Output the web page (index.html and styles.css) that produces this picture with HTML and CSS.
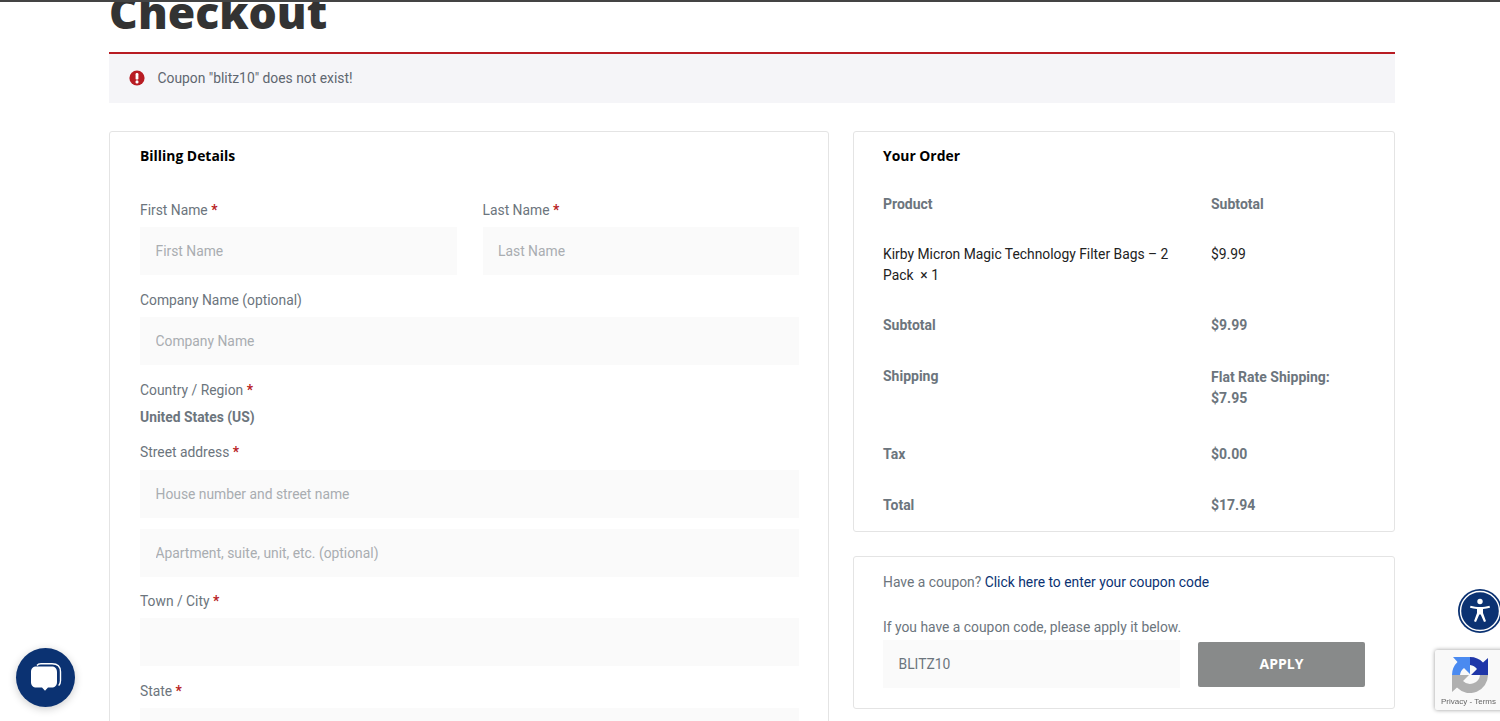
FILE: index.html
```html
<!DOCTYPE html>
<html lang="en">
<head>
    <meta charset="UTF-8">
    <meta name="viewport" content="width=device-width, initial-scale=1.0">
    <link rel="stylesheet" href="styles.css">
    <title>Checkout</title>
</head>
<body>
    <div class="top-line"></div>
    <main class="page">
        <h1 class="page-title">Checkout</h1>

        <div class="notice">
            <svg class="notice-icon" viewBox="0 0 16 16" width="16" height="16">
                <circle cx="8" cy="8" r="7.6" fill="#b81c23"/>
                <rect x="6.6" y="3" width="2.8" height="6.6" rx="1.2" fill="#fff"/>
                <circle cx="8" cy="11.9" r="1.55" fill="#fff"/>
            </svg>
            <span>Coupon "blitz10" does not exist!</span>
        </div>

        <div class="columns">
            <section class="card billing">
                <h2 class="card-title">Billing Details</h2>

                <div class="field-row">
                    <div class="field">
                        <label class="label">First Name <b class="req">*</b></label>
                        <input class="input" placeholder="First Name">
                    </div>
                    <div class="field">
                        <label class="label">Last Name <b class="req">*</b></label>
                        <input class="input" placeholder="Last Name">
                    </div>
                </div>

                <div class="field">
                    <label class="label">Company Name (optional)</label>
                    <input class="input" placeholder="Company Name">
                </div>

                <div class="field country">
                    <label class="label">Country / Region <b class="req">*</b></label>
                    <strong class="country-value">United States (US)</strong>
                </div>

                <div class="field street">
                    <label class="label">Street address <b class="req">*</b></label>
                    <input class="input" placeholder="House number and street name">
                    <input class="input input-second" placeholder="Apartment, suite, unit, etc. (optional)">
                </div>

                <div class="field">
                    <label class="label">Town / City <b class="req">*</b></label>
                    <input class="input">
                </div>

                <div class="field">
                    <label class="label">State <b class="req">*</b></label>
                    <input class="input">
                </div>
            </section>

            <aside class="side">
                <section class="card order">
                    <h2 class="card-title">Your Order</h2>
                    <table class="order-table">
                        <tr class="row-head">
                            <th>Product</th>
                            <th>Subtotal</th>
                        </tr>
                        <tr class="row-item">
                            <td>Kirby Micron Magic Technology Filter Bags – 2 Pack &nbsp;× 1</td>
                            <td>$9.99</td>
                        </tr>
                        <tr class="row-subtotal">
                            <th>Subtotal</th>
                            <th>$9.99</th>
                        </tr>
                        <tr class="row-shipping">
                            <th>Shipping</th>
                            <th class="ship-value">Flat Rate Shipping: $7.95</th>
                        </tr>
                        <tr class="row-tax">
                            <th>Tax</th>
                            <th>$0.00</th>
                        </tr>
                        <tr class="row-total">
                            <th>Total</th>
                            <th>$17.94</th>
                        </tr>
                    </table>
                </section>

                <section class="card coupon">
                    <p class="coupon-line">Have a coupon? <a class="coupon-link" href="#">Click here to enter your coupon code</a></p>
                    <p class="coupon-hint">If you have a coupon code, please apply it below.</p>
                    <div class="coupon-form">
                        <input class="input coupon-input" value="BLITZ10">
                        <button class="apply-btn" type="button">APPLY</button>
                    </div>
                </section>
            </aside>
        </div>
    </main>

    <button class="chat-btn" type="button" aria-label="Chat">
        <svg viewBox="0 0 32 30" width="32" height="30">
            <path d="M7 2.5C8 1 9.5 .8 11 .8h11c5 0 8.500 2.500 8.500 8v9c0 2-.6 3.500-1.800 4.800" fill="none" stroke="#fff" stroke-width="1.400"/>
            <path d="M6.500 3.500h15c3.500 0 5.500 2 5.500 5.500v10c0 3.500-2 5.500-5.500 5.500h-3.500l-3 3.200-3-3.200H6.500C3 24.500 1 22.500 1 19V9c0-3.500 2-5.500 5.500-5.500z" fill="#fff"/>
        </svg>
    </button>

    <button class="access-btn" type="button" aria-label="Accessibility">
        <svg viewBox="0 0 42 42" width="42" height="42">
            <circle cx="21" cy="21" r="19.500" fill="none" stroke="#fff" stroke-width="1.400"/>
            <circle cx="21" cy="11.500" r="2.700" fill="#fff"/>
            <path d="M11.500 15.800c3 .9 6 1.300 9.500 1.300s6.500-.4 9.500-1.300l.5 1.900c-2.300.7-4.600 1.100-7 1.300v4l3 8.200-2 .8-3.300-7.600h-1.400L17 32l-2-.8 3-8.200v-4c-2.400-.2-4.700-.6-7-1.300z" fill="#fff"/>
        </svg>
    </button>

    <div class="recaptcha">
        <svg viewBox="0 0 36 36" width="36" height="36">
            <path d="M36 18A18 18 0 0 1 5 30.500L0 35V18H17L11 24A10 10 0 0 0 28 18Z" fill="#b0b0b0"/>
            <path d="M0 18A18 18 0 0 1 5.500 5L1 0H18V17L12 11A10 10 0 0 0 8 18Z" fill="#4a8af0"/>
            <path d="M18 0A18 18 0 0 1 31 5.500L36 1V18H19L25 12A10 10 0 0 0 18 8Z" fill="#1f36a8"/>
        </svg>
        <div class="recaptcha-links">Privacy - Terms</div>
    </div>
</body>
</html>
```

FILE: styles.css
```css
* {
    box-sizing: border-box;
    padding: 0;
    margin: 0;
}

html, body {
    height: 721px;
    overflow: hidden;
}

body {
    background: #fff;
    font-family: Roboto, "Liberation Sans", sans-serif;
    font-size: 13.85px;
    color: #6c757d;
}

.top-line {
    height: 2px;
    background: #444;
    position: relative;
    z-index: 2;
}

.page {
    width: 1286px;
    margin-left: 109px;
}

.page-title {
    font-family: "Open Sans", sans-serif;
    font-size: 44.5px;
    font-weight: 800;
    line-height: 50px;
    color: #333;
    margin-top: -15px;
    height: 65px;
}

.notice {
    display: flex;
    align-items: center;
    gap: 12.5px;
    height: 51px;
    padding-left: 20px;
    padding-bottom: 2px;
    background: #f5f5f8;
    border-top: 2px solid #b81c23;
    color: #5f6770;
}

.columns {
    display: flex;
    align-items: flex-start;
    gap: 24px;
    margin-top: 28px;
}

.card {
    border: 1px solid #e4e4e4;
    border-radius: 3px;
    background: #fff;
}

.card-title {
    font-family: "Open Sans", sans-serif;
    font-size: 13.9px;
    font-weight: 700;
    line-height: 20px;
    color: #000;
}

.billing {
    width: 720px;
    height: 640px;
    padding: 14px 29px 0 30px;
}

.field-row {
    display: flex;
    gap: 26px;
    margin-top: 34px;
}

.field-row .field {
    flex: 1;
}

.field {
    margin-bottom: 15px;
}

.label {
    display: block;
    height: 20px;
    line-height: 20px;
    margin-bottom: 7px;
    color: #6c757d;
}

.req {
    color: #b81c23;
    font-weight: 700;
}

.input {
    display: block;
    width: 100%;
    height: 48px;
    padding: 0 15.5px;
    border: 0;
    outline: 0;
    background: #fafafa;
    font: inherit;
    color: #6c757d;
}

.input::placeholder {
    color: #a9adb1;
}

.input-second {
    margin-top: 11px;
    margin-bottom: -1px;
}

.country {
    margin-bottom: 14px;
}

.street .label {
    margin-bottom: 8px;
}

.country-value {
    display: block;
    height: 21px;
    line-height: 21px;
    font-weight: 700;
    color: #6c757d;
}

.side {
    width: 542px;
}

.order {
    height: 401px;
    padding: 14px 29px 0 29px;
}

.order-table {
    width: 100%;
    margin-top: 15px;
    border-collapse: collapse;
    table-layout: fixed;
    font-size: 14px;
}

.order-table th,
.order-table td {
    text-align: left;
    vertical-align: top;
    line-height: 21px;
}

.order-table th {
    font-weight: 700;
    color: #6c757d;
}

.order-table tr > :first-child {
    width: 328px;
    padding-right: 30px;
}

.order-table td {
    color: #222;
    font-size: 13.85px;
}

.row-head > * { height: 54px; padding-top: 13px; }
.row-item > * { height: 71px; padding-top: 9px; }
.row-subtotal > * { height: 51px; padding-top: 9px; }
.row-shipping > * { height: 78px; padding-top: 9px; }
.row-tax > * { height: 51px; padding-top: 9px; }
.row-total > * { height: 30px; padding-top: 9px; }

.ship-value {
    padding-top: 10px;
}

.coupon {
    margin-top: 24px;
    height: 153px;
    padding: 15px 29px 0 29px;
}

.coupon-line {
    line-height: 21px;
}

.coupon-link {
    color: #0b3272;
    text-decoration: none;
}

.coupon-hint {
    line-height: 21px;
    margin-top: 24px;
}

.coupon-form {
    display: flex;
    align-items: flex-start;
    gap: 18px;
    margin-top: 2px;
}

.coupon-input {
    width: 297px;
    height: 48px;
}

.apply-btn {
    width: 167px;
    height: 45px;
    margin-top: 2px;
    padding-bottom: 2px;
    border: 0;
    border-radius: 2px;
    background: #888a8a;
    color: #fff;
    font-family: "Open Sans", sans-serif;
    font-size: 14px;
    font-weight: 700;
}

.chat-btn {
    position: fixed;
    left: 16px;
    top: 648px;
    width: 59px;
    height: 59px;
    border: 0;
    border-radius: 50%;
    background: #0b3272;
    box-shadow: 0 2px 8px rgba(0, 0, 0, 0.2);
    display: flex;
    align-items: center;
    justify-content: center;
}

.access-btn {
    position: fixed;
    left: 1458px;
    top: 589px;
    width: 44px;
    height: 44px;
    border: 0;
    border-radius: 50%;
    background: #0b3272;
    display: flex;
    align-items: center;
    justify-content: center;
    padding: 0;
}

.recaptcha {
    position: fixed;
    left: 1435px;
    top: 650px;
    width: 70px;
    height: 60px;
    padding: 7px 0 0 17px;
    background: #f9f9f9;
    border-radius: 2px;
    box-shadow: 0 0 4px rgba(0, 0, 0, 0.4);
}

.recaptcha svg {
    display: block;
}

.recaptcha-links {
    position: absolute;
    left: 6px;
    top: 47px;
    font-family: "Liberation Sans", sans-serif;
    font-size: 8px;
    color: #666;
    white-space: nowrap;
}
```
